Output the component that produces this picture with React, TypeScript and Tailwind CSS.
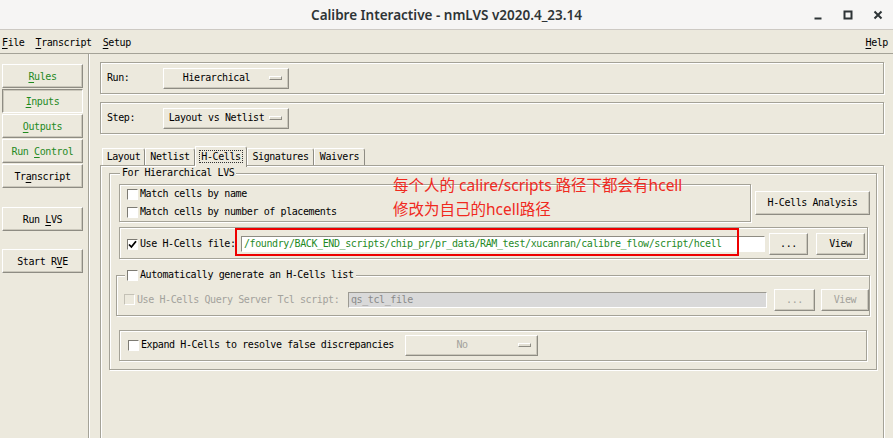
import React from "react";

const MONO =
  "font-['DejaVu_Sans_Mono','Liberation_Mono',monospace] text-[10px] tracking-[-0.4px] leading-[12px]";

function U({ children }: { children: React.ReactNode }) {
  return <span className="underline decoration-1 underline-offset-[2px]">{children}</span>;
}

type P = { className?: string; children?: React.ReactNode };

function Raised({ className = "", children }: P) {
  return (
    <div
      className={
        "flex items-center justify-center shrink-0 border border-t-white border-l-white border-r-[#8e8c83] border-b-[#8e8c83] shadow-[inset_-1px_-1px_0_#cbc8bc] " +
        className
      }
    >
      {children}
    </div>
  );
}

function Sunken({ className = "", children }: P) {
  return (
    <div
      className={
        "flex items-center justify-center shrink-0 border border-t-[#8e8c83] border-l-[#8e8c83] border-r-white border-b-white shadow-[inset_1px_1px_0_#cbc8bc] " +
        className
      }
    >
      {children}
    </div>
  );
}

function Etched({ className = "", children }: P) {
  return (
    <div className={"shrink-0 border border-[#a4a297] shadow-[inset_1px_1px_0_#fff,1px_1px_0_#fff] " + className}>
      {children}
    </div>
  );
}

function Check({ checked = false, disabled = false }: { checked?: boolean; disabled?: boolean }) {
  return (
    <span
      className={
        "inline-flex w-[11px] h-[11px] shrink-0 items-center justify-center border " +
        (disabled
          ? "border-t-[#c4c1b6] border-l-[#c4c1b6] border-r-white border-b-white bg-[#ece9dd]"
          : "border-t-[#7d7b73] border-l-[#7d7b73] border-r-white border-b-white bg-white")
      }
    >
      {checked && (
        <svg width="9" height="9" viewBox="0 0 9 9">
          <path d="M1 4.5 L3.4 7 L8 1.2" fill="none" stroke="#000" strokeWidth="1.8" />
        </svg>
      )}
    </span>
  );
}

function Indicator() {
  return (
    <span className="w-[13px] h-[4px] shrink-0 border border-t-white border-l-white border-r-[#8e8c83] border-b-[#8e8c83] bg-[#e2dfd3]" />
  );
}

function Dropdown({ className = "", text, disabled = false }: { className?: string; text: string; disabled?: boolean }) {
  return (
    <Raised className={"h-[21px] justify-start " + className}>
      <span className={"flex-1 text-center " + (disabled ? "text-[#a3a29c]" : "")}>{text}</span>
      <span className="mr-[6px] flex items-center">
        <Indicator />
      </span>
    </Raised>
  );
}

function Tab({ className = "", children, selected = false }: P & { selected?: boolean }) {
  if (selected) {
    return (
      <div
        className={
          "relative z-10 h-[21px] -mb-[2px] pb-[2px] flex items-center justify-center bg-[#ece9dd] border-l border-t border-r border-l-white border-t-white border-r-[#8e8c83] rounded-tr-[3px] " +
          className
        }
      >
        {children}
      </div>
    );
  }
  return (
    <div
      className={
        "h-[17px] flex items-center justify-center border-l border-t border-r border-l-white border-t-white border-r-[#8e8c83] rounded-tr-[3px] " +
        className
      }
    >
      {children}
    </div>
  );
}

export default function App() {
  return (
    <div className={"relative w-[893px] h-[438px] overflow-hidden bg-[#ece9dd] text-black " + MONO}>
      {/* Title bar */}
      <div className="h-[30px] bg-[#f6f5f4] border-b border-[#cdc9c3] grid grid-cols-[1fr_auto_1fr] items-center">
        <div />
        <div className="font-['Noto_Sans',sans-serif] text-[13.5px] leading-[20px] tracking-normal font-semibold text-[#2e3436]">
          Calibre Interactive - nmLVS v2020.4_23.14
        </div>
        <div className="flex justify-end">
          <div className="w-[30px] h-[20px] flex items-center justify-center">
            <svg width="10" height="10" viewBox="0 0 10 10">
              <path d="M1.5 8.5h7" stroke="#2e3436" strokeWidth="2" />
            </svg>
          </div>
          <div className="w-[30px] h-[20px] flex items-center justify-center">
            <svg width="10" height="10" viewBox="0 0 10 10">
              <rect x="1.5" y="1.5" width="7" height="7" fill="none" stroke="#2e3436" strokeWidth="2" />
            </svg>
          </div>
          <div className="w-[30px] h-[20px] flex items-center justify-center">
            <svg width="10" height="10" viewBox="0 0 10 10">
              <path d="M1.5 1.5L8.5 8.5M8.5 1.5L1.5 8.5" stroke="#2e3436" strokeWidth="2" />
            </svg>
          </div>
        </div>
      </div>

      {/* Menu bar */}
      <div className="h-[24px] border-b border-[#a4a297] flex items-center justify-between pl-[2px] pr-[5px] pt-[3px]">
        <div className="flex gap-[11px]">
          <span>
            <U>F</U>ile
          </span>
          <span>
            <U>T</U>ranscript
          </span>
          <span>
            <U>S</U>etup
          </span>
        </div>
        <span>
          <U>H</U>elp
        </span>
      </div>

      {/* Body */}
      <div className="flex h-[384px]">
        {/* Left panel */}
        <div className="w-[88px] shrink-0 pt-[10px] pl-[2px] flex flex-col">
          <Raised className="w-[81px] h-[24px] pt-[2px] text-[#1f8a1f]">
            <span>
              <U>R</U>ules
            </span>
          </Raised>
          <Sunken className="w-[81px] h-[24px] mt-[1px] pt-[2px] text-[#1f8a1f]">
            <span>
              <U>I</U>nputs
            </span>
          </Sunken>
          <Raised className="w-[81px] h-[24px] mt-[1px] pt-[2px] text-[#1f8a1f]">
            <span>
              <U>O</U>utputs
            </span>
          </Raised>
          <Raised className="w-[81px] h-[24px] mt-[1px] pt-[2px] text-[#1f8a1f]">
            <span>
              Run <U>C</U>ontrol
            </span>
          </Raised>
          <Raised className="w-[81px] h-[24px] mt-[1px] pt-[2px]">
            <span>
              Tr<U>a</U>nscript
            </span>
          </Raised>
          <Raised className="w-[81px] h-[24px] mt-[19px] pt-[2px]">
            <span>
              Run <U>L</U>VS
            </span>
          </Raised>
          <Raised className="w-[81px] h-[24px] mt-[18px] pt-[2px]">
            <span>
              Start R<U>V</U>E
            </span>
          </Raised>
        </div>
        <div className="w-[2px] shrink-0 border-l border-[#a4a297] bg-white" />

        {/* Main */}
        <div className="flex-1 pl-[10px] pt-[8px] flex flex-col">
          <Etched className="w-[784px] h-[32px] flex items-center pl-[6px]">
            <span className="w-[56px]">Run:</span>
            <Dropdown className="w-[126px]" text="Hierarchical" />
          </Etched>
          <Etched className="w-[784px] h-[32px] mt-[8px] flex items-center pl-[6px]">
            <span className="w-[56px]">Step:</span>
            <Dropdown className="w-[126px]" text="Layout vs Netlist" />
          </Etched>

          {/* Tabs */}
          <div className="mt-[12px] h-[19px] flex items-end pl-[2px]">
            <Tab className="w-[43px]">Layout</Tab>
            <Tab className="w-[50px]">Netlist</Tab>
            <Tab className="w-[52px]" selected>
              <span className="border border-dotted border-[#333] px-[1px] leading-[11px]">H-Cells</span>
            </Tab>
            <Tab className="w-[67px]">Signatures</Tab>
            <Tab className="w-[51px]">Waivers</Tab>
          </div>

          <Etched className="w-[784px] h-[300px] pt-[1px] pl-[8px]">
            <fieldset className="w-[768px] border border-[#a4a297] shadow-[inset_1px_1px_0_#fff,1px_1px_0_#fff] pb-[8px]">
              <legend className="ml-[10px] px-[2px] leading-[12px] bg-[#ece9dd]">For Hierarchical LVS</legend>

              {/* Match row */}
              <div className="mt-[5px] pl-[9px] flex items-center">
                <Etched className="w-[632px] h-[38px] flex flex-col pl-[7px]">
                  <div className="h-[18px] flex items-center gap-[2px]">
                    <Check />
                    <span>Match cells by name</span>
                  </div>
                  <div className="h-[18px] flex items-center gap-[2px]">
                    <Check />
                    <span>Match cells by number of placements</span>
                  </div>
                </Etched>
                <Raised className="ml-[4px] w-[115px] h-[24px]">H-Cells Analysis</Raised>
              </div>

              {/* H-Cells file */}
              <Etched className="mt-[5px] ml-[9px] w-[749px] h-[32px] flex items-center pl-[7px] pt-[2px]">
                <Check checked />
                <span className="ml-[2px] w-[101px]">Use H-Cells file:</span>
                <div className="w-[524px] h-[16px] bg-white border border-t-[#8e8c83] border-l-[#8e8c83] border-r-white border-b-white flex items-center pl-[2px] text-[#1f8a1f] whitespace-nowrap overflow-hidden">
                  /foundry/BACK_END_scripts/chip_pr/pr_data/RAM_test/xucanran/calibre_flow/script/hcell
                </div>
                <Raised className="ml-[4px] w-[39px] h-[22px]">...</Raised>
                <Raised className="ml-[8px] w-[49px] h-[22px]">View</Raised>
              </Etched>

              {/* Auto generate */}
              <fieldset className="mt-[9px] ml-[6px] w-[753px] border border-[#a4a297] shadow-[inset_1px_1px_0_#fff,1px_1px_0_#fff] pb-[4px]">
                <legend className="ml-[8px] px-[2px] bg-[#ece9dd]">
                  <span className="inline-flex items-center h-[14px] gap-[2px]">
                    <Check />
                    <span>Automatically generate an H-Cells list</span>
                  </span>
                </legend>
                <div className="mt-[5px] h-[22px] flex items-center pl-[7px] text-[#a3a29c]">
                  <Check disabled />
                  <span className="ml-[2px] w-[211px]">Use H-Cells Query Server Tcl script:</span>
                  <div className="w-[419px] h-[16px] bg-[#d9d9d9] border border-t-[#9c9a92] border-l-[#9c9a92] border-r-white border-b-white flex items-center pl-[2px] text-[#8a8a8a]">
                    qs_tcl_file
                  </div>
                  <Raised className="ml-[7px] w-[41px] h-[22px]">...</Raised>
                  <Raised className="ml-[6px] w-[48px] h-[22px]">View</Raised>
                </div>
              </fieldset>

              {/* Expand */}
              <Etched className="mt-[14px] ml-[9px] w-[748px] h-[31px] flex items-center pl-[8px]">
                <Check />
                <span className="ml-[2px] w-[264px]">Expand H-Cells to resolve false discrepancies</span>
                <Dropdown className="w-[133px]" text="No" disabled />
              </Etched>
            </fieldset>
          </Etched>
        </div>
      </div>

      {/* Annotation overlays */}
      <div className="absolute left-[235px] top-[228px] w-[504px] h-[28px] border-2 border-[#ee0000]" />
      <div className="absolute left-[393px] top-[173px] font-['Noto_Sans','Noto_Sans_CJK_SC',sans-serif] text-[15.5px] leading-[24px] tracking-normal text-[#f02a1f] whitespace-nowrap">
        <div>每个人的 calire/scripts 路径下都会有hcell</div>
        <div>修改为自己的hcell路径</div>
      </div>
    </div>
  );
}
